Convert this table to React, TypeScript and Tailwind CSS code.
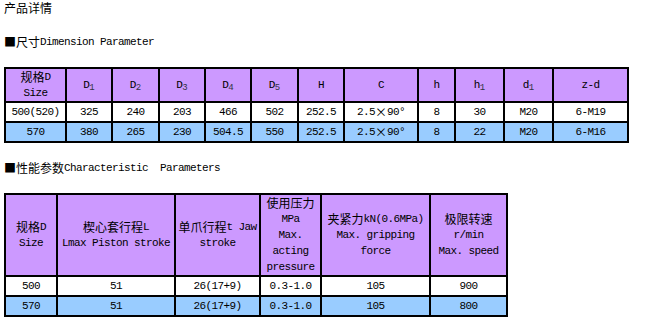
import React from 'react'

// split a string into CJK runs (12px) and latin runs (mono, 6px advance)
const T = ({ s }: { s: string }) => {
  const parts = s.split(/([\u3000-\u9fff\uff00-\uffef■×]+)/).filter((p) => p !== '')
  return (
    <>
      {parts.map((p, i) =>
        /[\u3000-\u9fff\uff00-\uffef■×]/.test(p) ? (
          <span key={i} className="text-[12px] align-top leading-[16px] [font-family:'Noto_Sans_CJK_SC',sans-serif]">
            {p}
          </span>
        ) : (
          <span key={i} className="text-[11px] align-top leading-[16px] tracking-[-0.6px] whitespace-pre [font-family:'Liberation_Mono','Noto_Sans_CJK_SC',monospace]">
            {p}
          </span>
        )
      )}
    </>
  )
}

const Line = ({ children }: { children: React.ReactNode }) => (
  <div className="h-[16px] leading-[16px] text-[12px] whitespace-nowrap overflow-visible">{children}</div>
)

const Sub = ({ base, sub }: { base: string; sub: string }) => (
  <>
    <T s={base} />
    <span className="relative top-[3px] align-top leading-[16px] text-[9px] text-[#334] [font-family:'Liberation_Mono',monospace]">{sub}</span>
  </>
)

const cell = 'border-2 border-black text-center align-middle p-0 leading-[16px] text-[12px]'

const dims = {
  widths: ['w-[61px]', 'w-[46px]', 'w-[47px]', 'w-[46px]', 'w-[46px]', 'w-[47px]', 'w-[46px]', 'w-[74px]', 'w-[37px]', 'w-[49px]', 'w-[49px]', 'w-[75px]'],
  rows: [
    ['500(520)', '325', '240', '203', '466', '502', '252.5', '2.5×90°', '8', '30', 'M20', '6-M19'],
    ['570', '380', '265', '230', '504.5', '550', '252.5', '2.5×90°', '8', '22', 'M20', '6-M16'],
  ],
}

const perf = {
  widths: ['w-[52px]', 'w-[118px]', 'w-[85px]', 'w-[61px]', 'w-[109px]', 'w-[77px]'],
  head: [
    ['规格D', 'Size'],
    ['楔心套行程L', 'Lmax Piston stroke'],
    ['单爪行程t Jaw', 'stroke'],
    ['使用压力', 'MPa', 'Max.', 'acting', 'pressure'],
    ['夹紧力kN(0.6MPa)', 'Max. gripping', 'force'],
    ['极限转速', 'r/min', 'Max. speed'],
  ],
  rows: [
    ['500', '51', '26(17+9)', '0.3-1.0', '105', '900'],
    ['570', '51', '26(17+9)', '0.3-1.0', '105', '800'],
  ],
}

export default function App() {
  return (
    <div className="w-[661px] h-[327px] bg-white text-black overflow-hidden pl-[4px]">
      <Line>
        <T s="产品详情" />
      </Line>

      <div className="mt-[18px]">
        <Line>
          <T s="■尺寸Dimension Parameter" />
        </Line>
      </div>

      <table className="mt-[17px] table-fixed border-collapse w-[623px]">
        <colgroup>
          {dims.widths.map((w, i) => (
            <col key={i} className={w} />
          ))}
        </colgroup>
        <tbody>
          <tr className="h-[33px] bg-[#cc99ff]">
            <td className={cell}>
              <Line><T s="规格D" /></Line>
              <Line><T s="Size" /></Line>
            </td>
            <td className={cell}><Line><Sub base="D" sub="1" /></Line></td>
            <td className={cell}><Line><Sub base="D" sub="2" /></Line></td>
            <td className={cell}><Line><Sub base="D" sub="3" /></Line></td>
            <td className={cell}><Line><Sub base="D" sub="4" /></Line></td>
            <td className={cell}><Line><Sub base="D" sub="5" /></Line></td>
            <td className={cell}><Line><T s="H" /></Line></td>
            <td className={cell}><Line><T s="C" /></Line></td>
            <td className={cell}><Line><T s="h" /></Line></td>
            <td className={cell}><Line><Sub base="h" sub="1" /></Line></td>
            <td className={cell}><Line><Sub base="d" sub="1" /></Line></td>
            <td className={cell}><Line><T s="z-d" /></Line></td>
          </tr>
          {dims.rows.map((r, ri) => (
            <tr key={ri} className={ri === 0 ? 'h-[20px] bg-white' : 'h-[20px] bg-[#99ccff]'}>
              {r.map((c, ci) => (
                <td key={ci} className={cell}>
                  <Line><T s={c} /></Line>
                </td>
              ))}
            </tr>
          ))}
        </tbody>
      </table>

      <div className="mt-[17px]">
        <Line>
          <T s="■性能参数Characteristic  Parameters" />
        </Line>
      </div>

      <table className="mt-[17px] table-fixed border-collapse w-[503px]">
        <colgroup>
          {perf.widths.map((w, i) => (
            <col key={i} className={w} />
          ))}
        </colgroup>
        <tbody>
          <tr className="h-[81px] bg-[#cc99ff]">
            {perf.head.map((lines, i) => (
              <td key={i} className={cell}>
                {lines.map((l, j) => (
                  <Line key={j}>
                    <T s={l} />
                  </Line>
                ))}
              </td>
            ))}
          </tr>
          {perf.rows.map((r, ri) => (
            <tr key={ri} className={ri === 0 ? 'h-[20px] bg-white' : 'h-[20px] bg-[#99ccff]'}>
              {r.map((c, ci) => (
                <td key={ci} className={cell}>
                  <Line><T s={c} /></Line>
                </td>
              ))}
            </tr>
          ))}
        </tbody>
      </table>
    </div>
  )
}
